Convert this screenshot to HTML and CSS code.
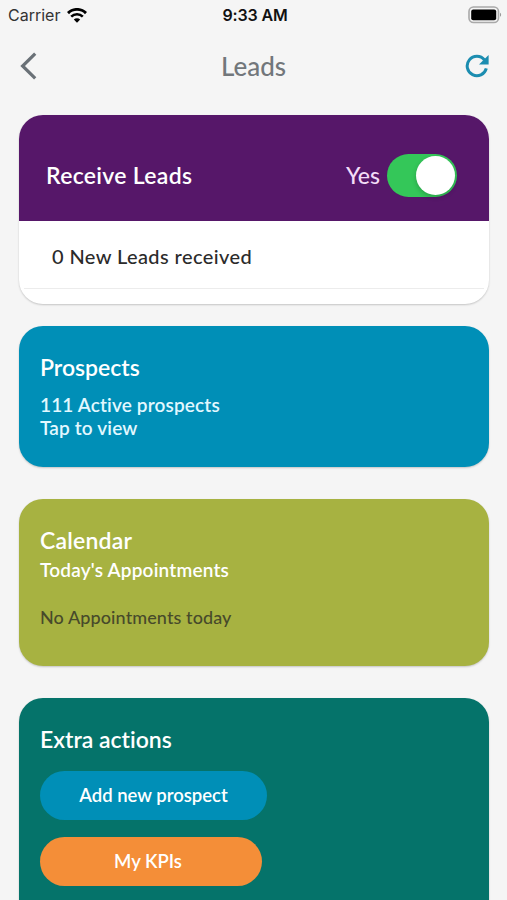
FILE: index.html
```html
<!DOCTYPE html>
<html lang="en">
<head>
    <meta charset="UTF-8">
    <meta name="viewport" content="width=device-width, initial-scale=1.0">
    <title>Leads</title>
    <link rel="stylesheet" href="styles.css">
</head>
<body>

    <div class="status-bar">
        <div class="status-left">
            <span class="carrier">Carrier</span>
            <svg class="wifi" width="20" height="15" viewBox="0 0 20 15">
                <path d="M1 5.1a12.8 12.8 0 0 1 18 0" fill="none" stroke="#000" stroke-width="2.9"/>
                <path d="M4.2 8.6a8.3 8.3 0 0 1 11.6 0" fill="none" stroke="#000" stroke-width="2.6"/>
                <path d="M10 14.8l-3.2-3.3a4.6 4.6 0 0 1 6.4 0z"/>
            </svg>
        </div>
        <span class="time">9:33 AM</span>
        <div class="status-right">
            <svg width="34" height="18" viewBox="0 0 34 18">
                <rect x="1" y="1" width="29.5" height="15.5" rx="4.5" fill="#f5f5f5" stroke="#a9a9a9" stroke-width="1.6"/>
                <rect x="3.2" y="3.4" width="25" height="10.8" rx="2"/>
                <path d="M32 6.8c1.5.6 1.5 3.4 0 4z" fill="#999"/>
            </svg>
        </div>
    </div>

    <div class="nav">
        <svg class="back" width="18" height="28" viewBox="0 0 18 28">
            <path d="M15.2 1.6L2.6 14l12.6 12.4" fill="none" stroke="#6a7177" stroke-width="3.2"/>
        </svg>
        <h1>Leads</h1>
        <svg class="refresh" width="24" height="24" viewBox="0 0 24 24">
            <path d="M21.3 14.4a9.7 9.7 0 1 1-1.8-8.4" fill="none" stroke="#1c8db0" stroke-width="3"/>
            <path d="M23.6 1v9.6H14z" fill="#1c8db0"/>
        </svg>
    </div>

    <div class="card leads">
        <div class="leads-header">
            <h2>Receive Leads</h2>
            <span class="yes">Yes</span>
            <div class="switch"><div class="knob"></div></div>
        </div>
        <div class="leads-row">0 New Leads received</div>
    </div>

    <div class="card prospects">
        <h2>Prospects</h2>
        <p class="active">111 Active prospects</p>
        <p class="tap">Tap to view</p>
    </div>

    <div class="card calendar">
        <h2>Calendar</h2>
        <p class="today">Today's Appointments</p>
        <p class="none">No Appointments today</p>
    </div>

    <div class="card actions">
        <h2>Extra actions</h2>
        <button class="add">Add new prospect</button>
        <button class="kpis">My KPIs</button>
    </div>

</body>
</html>
```
FILE: styles.css
```css
* {
    box-sizing: border-box;
}
body {
    margin: 0;
    height: 900px;
    overflow: hidden;
    background-color: #f5f5f5;
    font-family: Lato, "Open Sans", sans-serif;
    font-variant-ligatures: none;
    color: #fff;
}
h1, h2, p {
    margin: 0;
}
svg {
    display: block;
}
.status-bar {
    display: grid;
    grid-template-columns: 1fr auto 1fr;
    align-items: center;
    height: 30px;
    padding: 0 5px 0 8px;
    font-family: Inter, sans-serif;
    font-size: 16px;
    color: #111;
}
.status-left {
    display: flex;
    align-items: center;
    gap: 7px;
}
.carrier {
    color: #333;
}
.time {
    font-weight: 600;
    letter-spacing: -0.15px;
}
.status-right {
    display: flex;
    justify-content: flex-end;
}
.nav {
    display: flex;
    align-items: center;
    justify-content: space-between;
    height: 72px;
    padding: 0 18px 0 20px;
}
.nav h1 {
    padding-left: 4px;
    font-size: 26px;
    font-weight: 500;
    color: #72777b;
}
.card {
    width: 470px;
    margin-left: 19px;
    border-radius: 24px;
    box-shadow: 0 1px 2px rgba(0, 0, 0, 0.2);
}
.card h2 {
    font-size: 23px;
    font-weight: 600;
    line-height: 28px;
}
.leads {
    height: 189px;
    margin-top: 13px;
    background-color: #fff;
    overflow: hidden;
}
.leads-header {
    display: flex;
    align-items: center;
    height: 106px;
    padding: 14px 32px 0 27px;
    background-color: #561769;
}
.leads-header h2 {
    letter-spacing: 0.3px;
}
.yes {
    margin-left: auto;
    font-size: 23px;
    font-weight: 500;
    color: #f3dcf7;
}
.switch {
    display: flex;
    justify-content: flex-end;
    width: 70px;
    height: 43px;
    margin-left: 7px;
    padding: 2px;
    border-radius: 22px;
    background-color: #34c759;
}
.knob {
    width: 39px;
    height: 39px;
    border-radius: 50%;
    background-color: #fff;
    box-shadow: 0 2px 5px rgba(0, 0, 0, 0.2);
}
.leads-row {
    height: 68px;
    margin: 0 5px;
    padding-left: 28px;
    border-bottom: 1px solid #ececec;
    font-size: 20px;
    font-weight: 500;
    letter-spacing: 0.4px;
    line-height: 70px;
    color: #2b2b2b;
}
.prospects {
    height: 141px;
    margin-top: 22px;
    padding: 27px 21px;
    background-color: #008fb7;
}
.prospects p {
    font-size: 19px;
    font-weight: 600;
    letter-spacing: 0.15px;
    line-height: 23px;
    color: #e2f8ff;
}
.prospects .active {
    margin-top: 12px;
}
.calendar {
    height: 167px;
    margin-top: 32px;
    padding: 27px 21px;
    background-color: #a7b241;
}
.calendar h2 {
    letter-spacing: 0.2px;
}
.calendar p {
    font-size: 19px;
    font-weight: 600;
    letter-spacing: 0.2px;
    line-height: 24px;
}
.calendar .today {
    margin-top: 4px;
}
.calendar .none {
    margin-top: 23px;
    font-size: 18px;
    font-weight: 500;
    letter-spacing: 0.1px;
    color: #474a2b;
}
.actions {
    height: 240px;
    margin-top: 32px;
    padding: 27px 21px;
    background-color: #05736a;
}
.actions button {
    display: block;
    height: 49px;
    padding: 0 0 2px;
    border: none;
    border-radius: 25px;
    font-family: inherit;
    font-size: 18.5px;
    font-weight: 600;
    color: #fff;
}
.actions .add {
    width: 227px;
    margin-top: 18px;
    background-color: #008fb7;
}
.actions .kpis {
    width: 222px;
    margin-top: 17px;
    padding-right: 6px;
    background-color: #f48e38;
}
```
